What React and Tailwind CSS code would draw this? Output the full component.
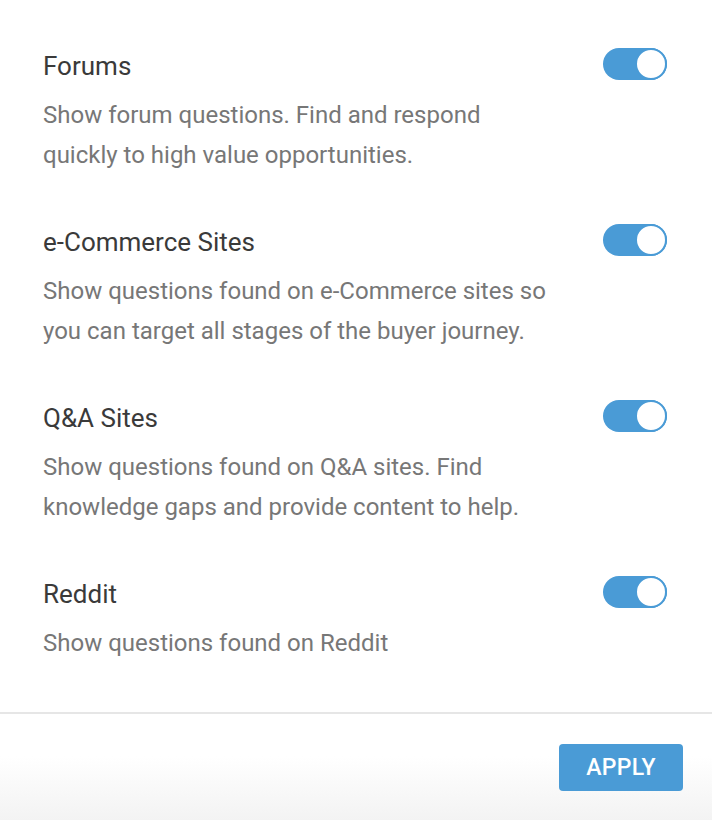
const items = [
  {
    title: "Forums",
    desc: ["Show forum questions. Find and respond", "quickly to high value opportunities."],
  },
  {
    title: "e-Commerce Sites",
    desc: ["Show questions found on e-Commerce sites so", "you can target all stages of the buyer journey."],
  },
  {
    title: "Q&A Sites",
    desc: ["Show questions found on Q&A sites. Find", "knowledge gaps and provide content to help."],
  },
  {
    title: "Reddit",
    desc: ["Show questions found on Reddit"],
  },
];

function Toggle() {
  return (
    <button className="relative h-8 w-16 shrink-0 rounded-full bg-[#4a9bd6]">
      <span className="absolute right-0 top-0 h-8 w-8 rounded-full border-2 border-[#4a9bd6] bg-white" />
    </button>
  );
}

export default function App() {
  return (
    <div className="flex h-[820px] w-[712px] flex-col bg-white" style={{ fontFamily: "Roboto, 'Liberation Sans', sans-serif" }}>
      <div className="flex flex-1 flex-col gap-[51px] px-[43px] pt-[50px]">
        {items.map((item) => (
          <div key={item.title} className="flex justify-between">
            <div>
              <h3 className="text-[26px] leading-8 text-[#3a3a3a]">{item.title}</h3>
              <p className="mt-[13px] text-[24px] leading-10 text-[#777]">
                {item.desc.map((line) => (
                  <span key={line} className="block whitespace-nowrap">{line}</span>
                ))}
              </p>
            </div>
            <div className="-mt-0.5 mr-[2px]">
              <Toggle />
            </div>
          </div>
        ))}
      </div>
      <div className="flex h-[108px] items-start justify-end border-t-2 border-[#e6e6e6] bg-gradient-to-b from-white from-40% to-[#f3f3f3] pr-[29px] pt-[30px]">
        <button className="h-[47px] w-[124px] rounded bg-[#4a9bd6] pt-0.5 text-[23px] font-medium tracking-[0.3px] text-white">APPLY</button>
      </div>
    </div>
  );
}
